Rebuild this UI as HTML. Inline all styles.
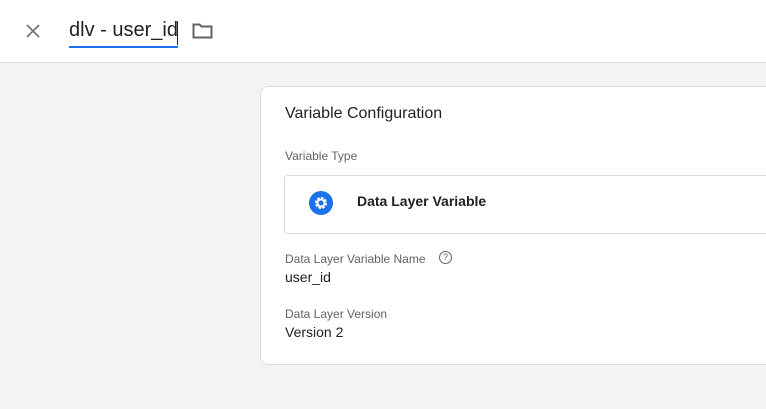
<!DOCTYPE html>
<html><head><style>
body{margin:0;width:766px;height:409px;background:#f1f3f4;font-family:"Liberation Sans",sans-serif;overflow:hidden;position:relative}
.top{position:absolute;left:0;top:0;width:766px;height:62px;background:#fff;border-bottom:1px solid #dadce0}
.card{position:absolute;left:260px;top:86px;width:520px;height:279px;background:#fff;border:1px solid #dadce0;border-radius:8px;box-sizing:border-box}
.t{position:absolute;white-space:nowrap}
</style></head><body>
<div class="top">
<svg class="t" style="left:25px;top:23px" width="16" height="16" viewBox="0 0 16 16"><path d="M2 2L14 14M14 2L2 14" stroke="#757575" stroke-width="1.8"/></svg>
<div class="t" style="left:69px;top:19px;font-size:20px;color:#202124">dlv - user_id</div>
<div class="t" style="left:177px;top:21px;width:1px;height:24px;background:#202124"></div>
<div class="t" style="left:69px;top:46px;width:109px;height:2px;background:#1a73e8"></div>
<svg class="t" style="left:192px;top:22px" width="21" height="18" viewBox="0 0 21 18"><path d="M1.5 2.5h6l2 2h10v11h-18z" fill="none" stroke="#5f6368" stroke-width="2"/></svg>
</div>
<div class="card">
<div class="t" style="left:24px;top:18px;font-size:16px;color:#202124">Variable Configuration</div>
<div class="t" style="left:24px;top:62px;font-size:12px;color:#5f6368">Variable Type</div>
<div class="t" style="left:23px;top:88px;width:520px;height:57px;border:1px solid #dadce0;border-radius:4px"></div>
<svg class="t" style="left:48px;top:104px" width="24" height="24" viewBox="0 0 24 24"><circle cx="12" cy="12" r="12" fill="#1a73e8"/><circle cx="12" cy="12" r="4.5" fill="none" stroke="#fff" stroke-width="3" stroke-dasharray="2.4 1.1"/><circle cx="12" cy="12" r="3.5" fill="none" stroke="#fff" stroke-width="2"/></svg>
<div class="t" style="left:96px;top:106px;font-size:14px;font-weight:bold;color:#202124">Data Layer Variable</div>
<div class="t" style="left:24px;top:165px;font-size:12px;color:#5f6368">Data Layer Variable Name</div>
<div class="t" style="left:178px;top:164px;width:11px;height:11px;border:1.5px solid #5f6368;border-radius:50%;font-size:9px;text-align:center;line-height:11px;color:#5f6368">?</div>
<div class="t" style="left:24px;top:182px;font-size:14px;color:#202124">user_id</div>
<div class="t" style="left:24px;top:220px;font-size:12px;color:#5f6368">Data Layer Version</div>
<div class="t" style="left:24px;top:237px;font-size:14px;color:#202124">Version 2</div>
</div>
</body></html>
